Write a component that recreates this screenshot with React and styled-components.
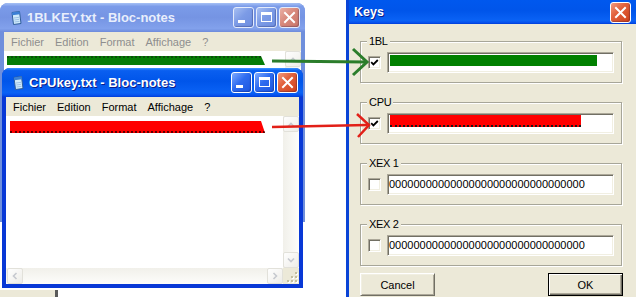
import React from "react";
import styled, { createGlobalStyle } from "styled-components";

const GlobalStyle = createGlobalStyle`
  html, body { margin: 0; padding: 0; background: #fff; }
  body { font-family: "Liberation Sans", Arial, sans-serif; }
`;

const activeTitle = `linear-gradient(180deg, #3d95ff 0%, #0a5ff0 9%, #0055ea 45%, #0a62f5 85%, #0654f0 93%, #003dd7 100%)`;
const inactiveTitle = `linear-gradient(180deg, #a6c0f5 0%, #7b9be9 12%, #7594e3 50%, #82a1ec 88%, #6d8bdb 100%)`;

const Desktop = styled.div`
  position: relative;
  width: 636px;
  height: 297px;
  overflow: hidden;
  background: #fff;
`;

const BackStrip = styled.div`
  position: absolute;
  left: 0;
  top: 290px;
  width: 55px;
  height: 10px;
  background: #ece9d8;
  border-right: 3px solid #5a5a5a;
`;

/* ---------- notepad windows ---------- */

const Frame = styled.div`
  position: absolute;
  left: ${(p) => p.$x}px;
  top: ${(p) => p.$y}px;
  width: ${(p) => p.$w}px;
  height: ${(p) => p.$h}px;
  display: flex;
  flex-direction: column;
  border-radius: 8px 8px 0 0;
  overflow: hidden;
  background: ${(p) => (p.$active ? "#0838d6" : "#6f8fdc")};
`;

const TitleBar = styled.div`
  flex: none;
  height: 29px;
  display: flex;
  align-items: center;
  gap: 3px;
  padding: 0 5px 0 8px;
  background: ${(p) => (p.$active ? activeTitle : inactiveTitle)};
`;

const TitleText = styled.span`
  flex: 1;
  font: bold 13px "Liberation Sans", Arial, sans-serif;
  color: ${(p) => (p.$active ? "#fff" : "#e8eefc")};
  text-shadow: ${(p) => (p.$active ? "1px 1px #0b1c8a" : "none")};
  white-space: nowrap;
`;

const Controls = styled.div`
  display: flex;
  gap: 2px;
`;

const CtlButton = styled.div`
  width: 21px;
  height: 21px;
  box-sizing: border-box;
  border: 1px solid ${(p) => (p.$active ? "#fff" : "#e4ebfb")};
  border-radius: 3px;
  display: flex;
  align-items: center;
  justify-content: center;
  background: ${(p) =>
    p.$close
      ? p.$active
        ? "linear-gradient(135deg, #f29b80 0%, #e2623d 40%, #cf4019 100%)"
        : "linear-gradient(135deg, #eab0a6 0%, #d8897c 45%, #c9766a 100%)"
      : p.$active
      ? "linear-gradient(135deg, #7eaaff 0%, #2f6cf0 45%, #1c55de 100%)"
      : "linear-gradient(135deg, #a7bff2 0%, #7c9be6 45%, #6e8ee0 100%)"};
  box-shadow: inset -1px -1px 1px rgba(0, 0, 60, 0.25);
`;

const Client = styled.div`
  flex: 1;
  min-height: 0;
  margin: 0 4px 4px;
  display: flex;
  flex-direction: column;
`;

const MenuBar = styled.div`
  flex: none;
  height: 19px;
  display: flex;
  align-items: center;
  gap: 11px;
  padding-left: 7px;
  background: #ece9d8;
  font-size: 11px;
  color: ${(p) => (p.$dim ? "#8e8e8e" : "#000")};
`;

const EditArea = styled.div`
  flex: 1;
  min-height: 0;
  display: grid;
  grid-template-columns: 1fr 16px;
  grid-template-rows: 1fr 16px;
  background: #fff;
`;

const TextPane = styled.div`
  padding: ${(p) => p.$top}px 0 0 ${(p) => p.$left}px;
  overflow: hidden;
`;

const Redaction = styled.div`
  width: ${(p) => p.$w}px;
  height: ${(p) => p.$h}px;
  background: ${(p) => p.$color};
  border-top: ${(p) => (p.$peekTop ? `2px dotted ${p.$peekTop}` : "none")};
  border-bottom: ${(p) => (p.$peekBottom ? `2px dotted ${p.$peekBottom}` : "none")};
  clip-path: polygon(0 0, calc(100% - 4px) 0, 100% 100%, 0 100%);
`;

const VScroll = styled.div`
  display: flex;
  flex-direction: column;
  justify-content: space-between;
  background: linear-gradient(90deg, #f1f0ea, #fdfdfb);
`;

const HScroll = styled.div`
  display: flex;
  justify-content: space-between;
  padding-left: 1px;
  background: linear-gradient(180deg, #f1f0ea, #fdfdfb);
`;

const ScrollBtn = styled.div`
  width: 16px;
  height: 16px;
  box-sizing: border-box;
  border: 1px solid #e2e1da;
  border-radius: 2px;
  background: linear-gradient(135deg, #fefefe, #eeede8);
  display: flex;
  align-items: center;
  justify-content: center;
`;

const Grip = styled.div`
  background: #ece9d8;
  display: flex;
  align-items: flex-end;
  justify-content: flex-end;
`;

/* ---------- Keys dialog ---------- */

const Dialog = styled.div`
  position: absolute;
  left: 346px;
  top: 0;
  width: 300px;
  height: 310px;
  box-sizing: border-box;
  padding: 0 3px 3px;
  display: flex;
  flex-direction: column;
  background: #0a44d6;
`;

const DlgTitle = styled.div`
  flex: none;
  height: 24px;
  display: flex;
  align-items: center;
  justify-content: space-between;
  padding: 0 12px 0 5px;
  background: linear-gradient(180deg, #0058ee 0%, #0055ea 45%, #0a62f5 85%, #0654f0 93%, #003dd7 100%);
`;

const DlgTitleText = styled.span`
  font: bold 12.5px "Liberation Sans", Arial, sans-serif;
  color: #fff;
  text-shadow: 1px 1px #0b1c8a;
`;

const DlgBody = styled.div`
  flex: 1;
  background: #ece9d8;
  padding: 17px 0 0 11px;
  display: flex;
  flex-direction: column;
  font-size: 11px;
  color: #000;
`;

const Groups = styled.div`
  display: flex;
  flex-direction: column;
  gap: 19px;
`;

const Group = styled.div`
  position: relative;
  width: 262px;
  height: 42px;
  box-sizing: border-box;
  border: 1px solid #a7a699;
  box-shadow: inset 1px 1px 0 #fff, 1px 1px 0 #fff;
  padding: 10px 7px 0 7px;
  display: flex;
  align-items: flex-start;
  gap: 6px;
`;

const Legend = styled.span`
  position: absolute;
  top: -7px;
  left: 6px;
  padding: 0 2px;
  line-height: 13px;
  letter-spacing: -0.3px;
  background: #ece9d8;
`;

const CheckBox = styled.div`
  flex: none;
  width: 13px;
  height: 13px;
  margin-top: 4px;
  box-sizing: border-box;
  background: #fff;
  border-style: solid;
  border-width: 1px;
  border-color: #aca899 #fff #fff #aca899;
  box-shadow: inset 1px 1px 0 #716f64, inset -1px -1px 0 #f1efe2;
  display: flex;
  align-items: center;
  justify-content: center;
`;

const Field = styled.div`
  width: 227px;
  height: 21px;
  box-sizing: border-box;
  background: #fff;
  border-style: solid;
  border-width: 1px;
  border-color: #aca899 #fff #fff #aca899;
  box-shadow: inset 1px 1px 0 #716f64, inset -1px -1px 0 #f1efe2;
  padding: 1px 0 0 1px;
  line-height: 16px;
  white-space: nowrap;
  overflow: hidden;
`;

const FieldBar = styled.div`
  margin: ${(p) => p.$top}px 0 0 1px;
  width: ${(p) => p.$w}px;
  height: ${(p) => p.$h}px;
  background: ${(p) => p.$color};
  border-bottom: ${(p) => (p.$dots ? "2px dotted #1a1a1a" : "none")};
`;

const ButtonRow = styled.div`
  width: 263px;
  margin-top: 7px;
  display: flex;
  justify-content: space-between;
`;

const DlgButton = styled.div`
  width: 75px;
  height: 23px;
  box-sizing: border-box;
  display: flex;
  align-items: center;
  justify-content: center;
  background: #ece9d8;
  border: 1px solid;
  border-color: ${(p) => (p.$default ? "#000" : "#fff #716f64 #716f64 #fff")};
  box-shadow: ${(p) =>
    p.$default
      ? "inset 1px 1px 0 #fff, inset -1px -1px 0 #716f64, inset -2px -2px 0 #aca899"
      : "inset 1px 1px 0 #f1efe2, inset -1px -1px 0 #aca899"};
`;

const Overlay = styled.svg`
  position: absolute;
  left: 0;
  top: 0;
  pointer-events: none;
`;

/* ---------- drawings ---------- */

const NotepadIcon = () => (
  <svg width="16" height="16" viewBox="0 0 16 16">
    <path d="M4 2.5 L11.5 1.5 L13 13.5 L5.5 14.5 Z" fill="#cfeafb" stroke="#2f5d9a" strokeWidth="1" />
    <path d="M4 2.5 L11.5 1.5 L11.9 4.3 L4.4 5.3 Z" fill="#3a7fd6" />
    <path d="M6 8 L11 7.3 M6.3 10 L11.3 9.3 M6.6 12 L11.6 11.3" stroke="#8fb6de" strokeWidth="0.8" />
  </svg>
);

const MinGlyph = () => (
  <svg width="19" height="19" viewBox="0 0 19 19">
    <rect x="4" y="12" width="7" height="3" fill="#fff" />
  </svg>
);

const MaxGlyph = () => (
  <svg width="19" height="19" viewBox="0 0 19 19">
    <rect x="4.5" y="4.5" width="10" height="9" fill="none" stroke="#fff" strokeWidth="1" />
    <rect x="4" y="4" width="11" height="3" fill="#fff" />
  </svg>
);

const CloseGlyph = () => (
  <svg width="19" height="19" viewBox="0 0 19 19">
    <path d="M5 5 L14 14 M14 5 L5 14" stroke="#fff" strokeWidth="2" strokeLinecap="square" />
  </svg>
);

const Chevron = ({ dir }) => {
  const pts = {
    up: "4,9.5 7,6.5 10,9.5",
    down: "4,5.5 7,8.5 10,5.5",
    left: "8.5,4 5.5,7 8.5,10",
    right: "5.5,4 8.5,7 5.5,10",
  }[dir];
  return (
    <svg width="14" height="14" viewBox="0 0 14 14">
      <polyline points={pts} fill="none" stroke="#c6c9cf" strokeWidth="1.6" />
    </svg>
  );
};

const GripDots = () => (
  <svg width="14" height="14" viewBox="0 0 14 14">
    {[
      [10, 2],
      [6, 6],
      [10, 6],
      [2, 10],
      [6, 10],
      [10, 10],
    ].map(([x, y]) => (
      <g key={`${x}-${y}`}>
        <rect x={x + 1} y={y + 1} width="2" height="2" fill="#fff" />
        <rect x={x} y={y} width="2" height="2" fill="#c3bf9f" />
      </g>
    ))}
  </svg>
);

const Tick = () => (
  <svg width="9" height="9" viewBox="0 0 9 9">
    <path d="M1.2 4.2 L3.4 6.4 L7.8 2" fill="none" stroke="#000" strokeWidth="1.8" />
  </svg>
);

/* ---------- pieces ---------- */

const menu = ["Fichier", "Edition", "Format", "Affichage", "?"];

function Notepad({ title, x, y, w, h, active, bar }) {
  return (
    <Frame $x={x} $y={y} $w={w} $h={h} $active={active}>
      <TitleBar $active={active}>
        <NotepadIcon />
        <TitleText $active={active}>{title}</TitleText>
        <Controls>
          <CtlButton $active={active}>
            <MinGlyph />
          </CtlButton>
          <CtlButton $active={active}>
            <MaxGlyph />
          </CtlButton>
          <CtlButton $active={active} $close>
            <CloseGlyph />
          </CtlButton>
        </Controls>
      </TitleBar>
      <Client>
        <MenuBar $dim={!active}>
          {menu.map((m) => (
            <span key={m}>{m}</span>
          ))}
        </MenuBar>
        <EditArea>
          <TextPane $top={bar.top} $left={bar.left}>
            <Redaction
              $w={bar.w}
              $h={bar.h}
              $color={bar.color}
              $peekTop={bar.peekTop}
              $peekBottom={bar.peekBottom}
            />
          </TextPane>
          <VScroll>
            <ScrollBtn>
              <Chevron dir="up" />
            </ScrollBtn>
            <ScrollBtn>
              <Chevron dir="down" />
            </ScrollBtn>
          </VScroll>
          <HScroll>
            <ScrollBtn>
              <Chevron dir="left" />
            </ScrollBtn>
            <ScrollBtn>
              <Chevron dir="right" />
            </ScrollBtn>
          </HScroll>
          <Grip>
            <GripDots />
          </Grip>
        </EditArea>
      </Client>
    </Frame>
  );
}

const zeros = "0".repeat(32);

const keys = [
  { label: "1BL", checked: true, bar: { top: 1, w: 207, h: 11, color: "#008000" } },
  { label: "CPU", checked: true, bar: { top: 0, w: 191, h: 10, color: "#ff0000", dots: true } },
  { label: "XEX 1", checked: false, text: zeros },
  { label: "XEX 2", checked: false, text: zeros },
];

function KeysDialog() {
  return (
    <Dialog>
      <DlgTitle>
        <DlgTitleText>Keys</DlgTitleText>
        <CtlButton $active $close>
          <CloseGlyph />
        </CtlButton>
      </DlgTitle>
      <DlgBody>
        <Groups>
          {keys.map((k) => (
            <Group key={k.label}>
              <Legend>{k.label}</Legend>
              <CheckBox>{k.checked && <Tick />}</CheckBox>
              <Field>
                {k.bar ? (
                  <FieldBar $top={k.bar.top} $w={k.bar.w} $h={k.bar.h} $color={k.bar.color} $dots={k.bar.dots} />
                ) : (
                  k.text
                )}
              </Field>
            </Group>
          ))}
        </Groups>
        <ButtonRow>
          <DlgButton>Cancel</DlgButton>
          <DlgButton $default>OK</DlgButton>
        </ButtonRow>
      </DlgBody>
    </Dialog>
  );
}

export default function App() {
  return (
    <>
      <GlobalStyle />
      <Desktop>
        <BackStrip />
        <Notepad
          title="1BLKEY.txt - Bloc-notes"
          x={0}
          y={3}
          w={305}
          h={219}
          active={false}
          bar={{ top: 5, left: 3, w: 258, h: 7, color: "#067d06", peekTop: "#0b4f0b" }}
        />
        <Notepad
          title="CPUkey.txt - Bloc-notes"
          x={2}
          y={68}
          w={301}
          h={220}
          active
          bar={{ top: 5, left: 4, w: 255, h: 10, color: "#ff0000", peekBottom: "#5a0000" }}
        />
        <KeysDialog />
        <Overlay width="636" height="297" viewBox="0 0 636 297">
          <line x1="272" y1="61" x2="366" y2="62" stroke="#2b7d2b" strokeWidth="3" />
          <polyline points="353,49 367,62 353,75" fill="none" stroke="#2b7d2b" strokeWidth="3" />
          <line x1="272" y1="127" x2="367" y2="125" stroke="#e22018" strokeWidth="2.5" />
          <polyline points="357,114 369,125 358,137" fill="none" stroke="#e22018" strokeWidth="2.5" />
        </Overlay>
      </Desktop>
    </>
  );
}
